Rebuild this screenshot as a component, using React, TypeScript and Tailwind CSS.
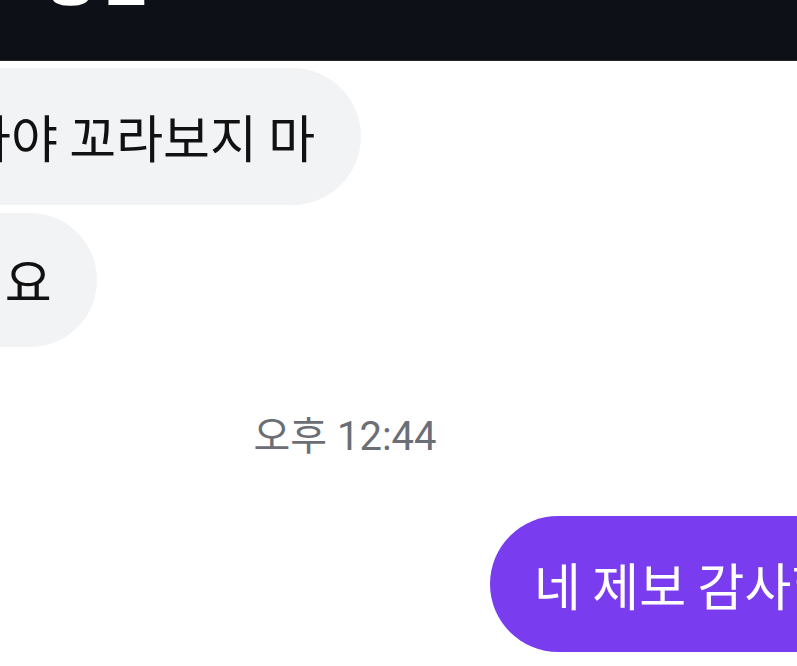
import React from "react";

export default function App() {
  const kr = { fontFamily: "'Noto Sans CJK KR', 'Noto Sans', sans-serif" } as React.CSSProperties;
  return (
    <div className="w-[797px] h-[666px] overflow-hidden bg-white flex flex-col" style={kr}>
      <header className="h-[61px] shrink-0 bg-[#0d1117] border-b border-[#26282c] overflow-hidden">
        <div className="-mt-[54px] ml-[44px] text-white font-bold text-[58px] leading-none whitespace-nowrap">
          송팀
        </div>
      </header>
      <div className="flex flex-col pt-[7px]">
        <div className="-ml-[81px] self-start h-[137px] rounded-full bg-[#f2f3f5] pl-[45px] pr-[46px] flex items-center whitespace-nowrap text-[51px] leading-none text-[#111111]">
          아야 꼬라보지 마
        </div>
        <div className="mt-[8px] -ml-[133px] self-start h-[134px] rounded-full bg-[#f2f3f5] pl-[44px] pr-[45px] flex items-center whitespace-nowrap text-[51px] leading-none text-[#111111]">
          있어요
        </div>
        <div className="mt-[70px] flex justify-center pr-[107px]">
          <span
            className="text-[40px] leading-none text-[#6b6e75]"
            style={{ fontFamily: "Roboto, 'Noto Sans CJK KR', sans-serif" }}
          >
            오후 12:44
          </span>
        </div>
        <div className="mt-[59px] ml-[490px] self-start h-[136px] rounded-full bg-[#7a3cef] pl-[44px] pr-[45px] flex items-center whitespace-nowrap text-[51px] leading-none text-white">
          네 제보 감사합니다
        </div>
      </div>
    </div>
  );
}
